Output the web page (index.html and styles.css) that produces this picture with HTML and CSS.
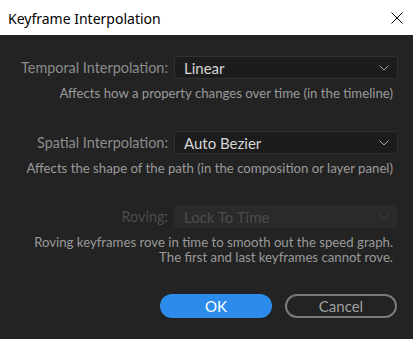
FILE: index.html
```html
<!DOCTYPE html>
<html lang="en">

<head>
    <meta charset="UTF-8" />
    <title>Keyframe Interpolation</title>
    <link rel="stylesheet" href="styles.css">
</head>

<body>
    <div class="titlebar">
        <span class="title">Keyframe Interpolation</span>
        <svg class="close" width="12" height="12" viewBox="0 0 12 12">
            <path d="M0.5 0.5 L11.5 11.5 M11.5 0.5 L0.5 11.5" stroke="#000" stroke-width="1" />
        </svg>
    </div>

    <div class="dialog">
        <div class="row">
            <label class="label">Temporal Interpolation:</label>
            <div class="select">
                <span>Linear</span>
                <svg class="chevron" width="10" height="6" viewBox="0 0 10 6">
                    <path d="M0.5 0.5 L5 5 L9.5 0.5" fill="none" stroke="#aaa" stroke-width="1" />
                </svg>
            </div>
        </div>
        <p class="help">Affects how a property changes over time (in the timeline)</p>

        <div class="row">
            <label class="label">Spatial Interpolation:</label>
            <div class="select">
                <span>Auto Bezier</span>
                <svg class="chevron" width="10" height="6" viewBox="0 0 10 6">
                    <path d="M0.5 0.5 L5 5 L9.5 0.5" fill="none" stroke="#aaa" stroke-width="1" />
                </svg>
            </div>
        </div>
        <p class="help">Affects the shape of the path (in the composition or layer panel)</p>

        <div class="row disabled">
            <label class="label">Roving:</label>
            <div class="select">
                <span>Lock To Time</span>
                <svg class="chevron" width="10" height="6" viewBox="0 0 10 6">
                    <path d="M0.5 0.5 L5 5 L9.5 0.5" fill="none" stroke="#444" stroke-width="1" />
                </svg>
            </div>
        </div>
        <p class="help">Roving keyframes rove in time to smooth out the speed graph.<br>The first and last keyframes cannot rove.</p>

        <div class="buttons">
            <button class="btn primary">OK</button>
            <button class="btn secondary">Cancel</button>
        </div>
    </div>
</body>

</html>
```

FILE: styles.css
```css
body {
    margin: 0;
    font-family: Lato, "Noto Sans", sans-serif;
    background-color: #232323;
    width: 413px;
    height: 339px;
    overflow: hidden;
}

.titlebar {
    height: 35px;
    background-color: #fff;
    display: flex;
    align-items: center;
    justify-content: space-between;
    padding: 0 10px 0 8px;
}

.title {
    font-family: "Noto Sans", sans-serif;
    font-size: 14px;
    color: #000;
    margin-top: 1px;
}

.dialog {
    padding: 21px 15px 0 0;
}

.row {
    display: grid;
    grid-template-columns: 1fr 224px;
    column-gap: 6px;
    align-items: center;
}

.label {
    text-align: right;
    font-size: 14.4px;
    color: #8c8c8c;
}

.select {
    height: 23px;
    box-sizing: border-box;
    border: 1px solid #303030;
    border-radius: 3px;
    background-color: #1c1c1c;
    display: flex;
    align-items: center;
    justify-content: space-between;
    padding: 0 8px 0 9px;
    font-size: 15px;
    color: #d6d6d6;
}

.help {
    margin: 7px 5px 0 0;
    text-align: right;
    font-size: 13.2px;
    line-height: 15px;
    color: #9a9a9a;
}

.help + .row {
    margin-top: 30px;
}

.row.disabled {
    margin-top: 29px;
}

.row.disabled .label {
    color: #4c4c4c;
}

.row.disabled .select {
    background-color: #2a2a2a;
    border-color: #2a2a2a;
    color: #4c4c4c;
}

.buttons {
    display: flex;
    justify-content: flex-end;
    gap: 13px;
    margin-top: 29px;
    padding-right: 1px;
}

.btn {
    width: 112px;
    height: 24px;
    border-radius: 12px;
    font-family: Lato, "Noto Sans", sans-serif;
    font-size: 15px;
    box-sizing: border-box;
}

.btn.primary {
    background-color: #2d8ceb;
    border: none;
    color: #fff;
}

.btn.secondary {
    background-color: transparent;
    border: 2px solid #7a7a7a;
    color: #a0a0a0;
}
```
